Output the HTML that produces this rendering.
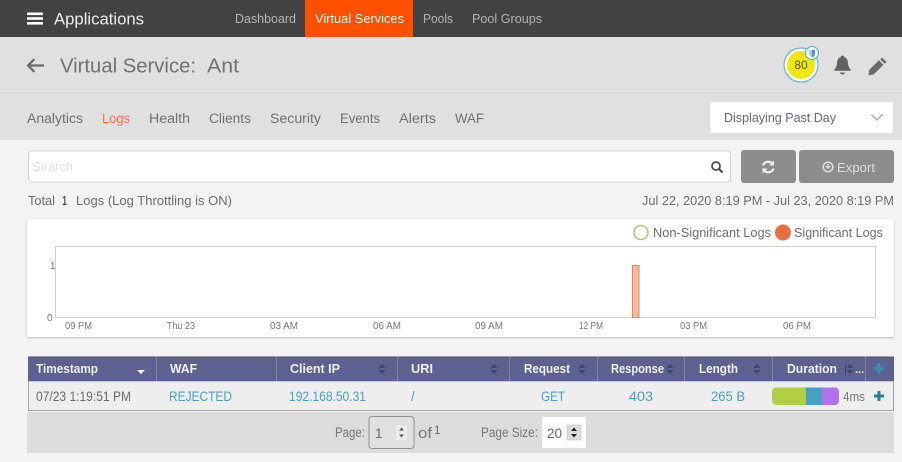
<!DOCTYPE html>
<html lang="en">
<head>
<meta charset="utf-8">
<title>Virtual Service: Ant</title>
<style>
html,body{margin:0;padding:0;width:902px;height:462px;overflow:hidden;background:#f3f3f3}
svg{display:block;filter:blur(.35px)}
text{font-family:"Liberation Sans",sans-serif;font-size:12.5px;fill:#6f6f6f}
.nav{fill:#b4b4b4;font-size:12.5px}
.tab{fill:#707070;font-size:13.5px}
.th{fill:#f0f0f5;font-size:13px;font-weight:bold}
.td{fill:#4f9dbf;font-size:13.5px}
.tick{fill:#777;font-size:10px}
.sort{fill:#3f4263}
</style>
</head>
<body>
<svg xmlns="http://www.w3.org/2000/svg" width="902" height="462" viewBox="0 0 902 462">
<defs>
<filter id="sh" x="-2%" y="-5%" width="104%" height="112%"><feDropShadow dx="0" dy="1" stdDeviation="1" flood-color="#000" flood-opacity=".22"/></filter>
<g id="s"><path class="sort" d="M-3.500-1.200L0-5l3.500 3.800zM-3.500 1.200L0 5l3.500-3.800z"/></g>
</defs>

<rect width="902" height="462" fill="#f3f3f3"/>
<!-- top bar -->
<rect width="902" height="37" fill="#424242"/>
<rect x="305" width="108" height="37" fill="#ff5000"/>
<rect x="27" y="12.500" width="16" height="2.600" fill="#fff"/><rect x="27" y="17.200" width="16" height="2.600" fill="#fff"/><rect x="27" y="22" width="16" height="2.600" fill="#fff"/>
<text x="54" y="24.500" textLength="90" lengthAdjust="spacingAndGlyphs" style="font-size:16.500px;fill:#eee">Applications</text>
<text class="nav" x="235" y="23" textLength="61" lengthAdjust="spacingAndGlyphs">Dashboard</text>
<text class="nav" x="315" y="23" textLength="89" lengthAdjust="spacingAndGlyphs" style="fill:#fff">Virtual Services</text>
<text class="nav" x="423" y="23" textLength="30" lengthAdjust="spacingAndGlyphs">Pools</text>
<text class="nav" x="472" y="23" textLength="70" lengthAdjust="spacingAndGlyphs">Pool Groups</text>

<!-- header -->
<rect y="37" width="902" height="103" fill="#e0e0e0"/>
<rect y="92" width="902" height="1.500" fill="#d7d7d7"/>
<path d="M44 65.500H28M34.500 59l-6.500 6.500 6.500 6.500" fill="none" stroke="#6b6b6b" stroke-width="2.200"/>
<text x="60" y="72.500" textLength="136" lengthAdjust="spacingAndGlyphs" style="font-size:20px;fill:#717171">Virtual Service:</text>
<text x="207" y="72.500" textLength="32" lengthAdjust="spacingAndGlyphs" style="font-size:20px;fill:#717171">Ant</text>

<circle cx="801" cy="65" r="17" fill="#fff" stroke="#62b4d4" stroke-width="1.200"/>
<circle cx="801" cy="65" r="14" fill="#f0e612"/>
<text x="801" y="69" text-anchor="middle" style="font-size:12px;fill:#5f5a20">80</text>
<circle cx="812" cy="53" r="6.500" fill="#fff" stroke="#62b4d4" stroke-width="1.200"/>
<path d="M809 50h6v3.500c0 2-1.500 3.300-3 4-1.500-.7-3-2-3-4z" fill="#a9cfe4"/>
<path d="M812 50h3v3.500c0 2-1.500 3.300-3 4z" fill="#4f97c2"/>
<path d="M842.500 55.500c1 0 1.700.7 1.700 1.600 2.800.8 3.600 3.300 3.800 6 .2 3 1 4.700 2.700 6.400v1.200h-16.400v-1.200c1.700-1.700 2.500-3.400 2.700-6.400.2-2.700 1-5.200 3.800-6 0-.9.700-1.600 1.700-1.600z M840 72.500h5c-.2 1.300-1.200 2-2.500 2s-2.300-.7-2.500-2z" fill="#616161"/>
<path d="M882 57.500l4.500 4.500-1.800 1.800-4.500-4.500zM878.900 60.200l4.500 4.500-9.700 9.700-5.200 1 .7-5.500z" fill="#6a6a6a"/>

<text class="tab" x="27" y="123" textLength="56" lengthAdjust="spacingAndGlyphs">Analytics</text>
<text class="tab" x="102" y="123" textLength="28" lengthAdjust="spacingAndGlyphs" style="fill:#f9744a">Logs</text>
<text class="tab" x="149" y="123" textLength="41" lengthAdjust="spacingAndGlyphs">Health</text>
<text class="tab" x="209" y="123" textLength="42" lengthAdjust="spacingAndGlyphs">Clients</text>
<text class="tab" x="270" y="123" textLength="51" lengthAdjust="spacingAndGlyphs">Security</text>
<text class="tab" x="340" y="123" textLength="40" lengthAdjust="spacingAndGlyphs">Events</text>
<text class="tab" x="399" y="123" textLength="37" lengthAdjust="spacingAndGlyphs">Alerts</text>
<text class="tab" x="455" y="123" textLength="29" lengthAdjust="spacingAndGlyphs">WAF</text>

<rect x="710" y="102" width="183" height="31" rx="2" fill="#fff"/>
<text x="724" y="122" textLength="112" lengthAdjust="spacingAndGlyphs" style="font-size:13px;fill:#5f6b78">Displaying Past Day</text>
<path d="M871.500 114.500l5.500 5.500 5.500-5.500" fill="none" stroke="#9a9a9a" stroke-width="1.200"/>

<!-- search row -->
<rect x="28.500" y="151" width="702" height="31" rx="3" fill="#fff" stroke="#d4d4d4"/>
<text x="32" y="171" textLength="41" lengthAdjust="spacingAndGlyphs" style="font-size:13px;fill:#e2e2e2">Search</text>
<circle cx="716" cy="166" r="4" fill="none" stroke="#4c4c4c" stroke-width="1.800"/>
<path d="M719 169l3.500 3.500" stroke="#4c4c4c" stroke-width="2.200"/>
<rect x="741" y="150" width="55" height="33" rx="3" fill="#8c8c8c"/>
<rect x="799" y="150" width="95" height="33" rx="3" fill="#8c8c8c"/>
<path d="M763 165.500a5.500 5 0 0 1 9.500-2M773.500 168.500a5.500 5 0 0 1-9.500 2" fill="none" stroke="#eee" stroke-width="2.200"/>
<path d="M774 160.500v5h-5zM762.500 173.500v-5h5z" fill="#eee"/>
<circle cx="828" cy="167" r="4.800" fill="none" stroke="#e0e0e0" stroke-width="1.500"/>
<path d="M828 164v3.500M825.800 166l2.200 2.300 2.200-2.300" fill="none" stroke="#e0e0e0" stroke-width="1.200"/>
<text x="837" y="172" textLength="38" lengthAdjust="spacingAndGlyphs" style="font-size:13px;fill:#dedede">Export</text>

<text x="28" y="205" textLength="27" lengthAdjust="spacingAndGlyphs">Total</text>
<text x="62" y="205" textLength="5" lengthAdjust="spacingAndGlyphs" style="fill:#555;font-weight:bold">1</text>
<text x="76" y="205" textLength="156" lengthAdjust="spacingAndGlyphs">Logs (Log Throttling is ON)</text>
<text x="642" y="205" textLength="252" lengthAdjust="spacingAndGlyphs">Jul 22, 2020 8:19 PM - Jul 23, 2020 8:19 PM</text>

<!-- chart -->
<rect x="27" y="219" width="867" height="118" fill="#fff" filter="url(#sh)"/>
<circle cx="641" cy="232.500" r="7" fill="#fff" stroke="#b6bd7c" stroke-width="1.500"/>
<text x="653" y="237" textLength="118" lengthAdjust="spacingAndGlyphs">Non-Significant Logs</text>
<circle cx="783" cy="232.500" r="8" fill="#e8703f"/>
<text x="794" y="237" textLength="89" lengthAdjust="spacingAndGlyphs">Significant Logs</text>
<rect x="55.500" y="246.500" width="820" height="71" fill="#fff" stroke="#cfcfcf"/>
<rect x="632.500" y="265.500" width="6.500" height="52" fill="#f5b9a2" stroke="#e9835d"/>
<text class="tick" x="50" y="269">1</text>
<text class="tick" x="47" y="321">0</text>
<text class="tick" x="65" y="329" textLength="27" lengthAdjust="spacingAndGlyphs">09 PM</text>
<text class="tick" x="167" y="329" textLength="28" lengthAdjust="spacingAndGlyphs">Thu 23</text>
<text class="tick" x="270" y="329" textLength="28" lengthAdjust="spacingAndGlyphs">03 AM</text>
<text class="tick" x="373" y="329" textLength="28" lengthAdjust="spacingAndGlyphs">06 AM</text>
<text class="tick" x="475" y="329" textLength="28" lengthAdjust="spacingAndGlyphs">09 AM</text>
<text class="tick" x="579" y="329" textLength="24" lengthAdjust="spacingAndGlyphs">12 PM</text>
<text class="tick" x="680" y="329" textLength="27" lengthAdjust="spacingAndGlyphs">03 PM</text>
<text class="tick" x="783" y="329" textLength="28" lengthAdjust="spacingAndGlyphs">06 PM</text>

<!-- table -->
<rect x="28.500" y="381" width="865" height="29.500" fill="#eeeeee" stroke="#a2a2a2"/>
<rect x="28" y="356.500" width="866" height="24.500" fill="#5d6190"/>
<rect x="28" y="356.500" width="866" height="1" fill="#555"/>
<path d="M156.500 357v24M276.500 357v24M397.500 357v24M509.500 357v24M597.500 357v24M684.500 357v24M772.500 357v24M865.500 357v24" stroke="#85858a" stroke-width="1"/>
<text class="th" x="36" y="373" textLength="62" lengthAdjust="spacingAndGlyphs">Timestamp</text>
<text class="th" x="170" y="373" textLength="27" lengthAdjust="spacingAndGlyphs">WAF</text>
<text class="th" x="290" y="373" textLength="50" lengthAdjust="spacingAndGlyphs">Client IP</text>
<text class="th" x="411" y="373" textLength="22" lengthAdjust="spacingAndGlyphs">URI</text>
<text class="th" x="524" y="373" textLength="46" lengthAdjust="spacingAndGlyphs">Request</text>
<text class="th" x="611" y="373" textLength="53" lengthAdjust="spacingAndGlyphs">Response</text>
<text class="th" x="699" y="373" textLength="39" lengthAdjust="spacingAndGlyphs">Length</text>
<text class="th" x="787" y="373" textLength="50" lengthAdjust="spacingAndGlyphs">Duration</text>
<path d="M137 370h8l-4 4z" fill="#fff"/>
<use href="#s" x="382" y="369"/><use href="#s" x="494" y="369"/><use href="#s" x="582" y="369"/><use href="#s" x="670" y="369"/><use href="#s" x="757" y="369"/><use href="#s" x="850" y="369"/>
<rect x="845" y="364" width="1" height="11" fill="#3f4263"/>
<text x="855" y="373" style="font-size:11px;fill:#e8e8f0;font-weight:bold">...</text>
<path d="M879 363.500v10M874 368.500h10" stroke="#3e8fb5" stroke-width="3"/>

<text x="36" y="401" textLength="95" lengthAdjust="spacingAndGlyphs" style="font-size:13.500px;fill:#6a6a6a">07/23 1:19:51 PM</text>
<text class="td" x="169" y="401" textLength="63" lengthAdjust="spacingAndGlyphs">REJECTED</text>
<text class="td" x="289" y="401" textLength="77" lengthAdjust="spacingAndGlyphs">192.168.50.31</text>
<text class="td" x="411" y="401">/</text>
<text class="td" x="541" y="401" textLength="24" lengthAdjust="spacingAndGlyphs">GET</text>
<text class="td" x="629" y="401" textLength="24" lengthAdjust="spacingAndGlyphs">403</text>
<text class="td" x="711" y="401" textLength="34" lengthAdjust="spacingAndGlyphs">265 B</text>
<path d="M776 387.500h30v17.500h-30a4 4 0 0 1-4-4v-9.500a4 4 0 0 1 4-4z" fill="#b0cf45"/>
<rect x="806" y="387.500" width="16" height="17.500" fill="#47a0c4"/>
<path d="M822 387.500h13a4 4 0 0 1 4 4v9.500a4 4 0 0 1-4 4h-13z" fill="#b072e8"/>
<text x="843" y="401" textLength="22" lengthAdjust="spacingAndGlyphs" style="font-size:12.500px;fill:#777">4ms</text>
<path d="M879 391v10M874 396h10" stroke="#2a7fa5" stroke-width="3"/>

<!-- footer -->
<rect x="27" y="412" width="867" height="41" fill="#dcdcdc"/>
<text x="335" y="437" textLength="30" lengthAdjust="spacingAndGlyphs" style="font-size:13.500px;fill:#777">Page:</text>
<rect x="369" y="416.500" width="45" height="32" rx="3" fill="#e0e0e0" stroke="#8f8f8f"/>
<text x="375" y="438" style="font-size:13.500px;fill:#666">1</text>
<rect x="396" y="425" width="11" height="15" fill="#ececec"/>
<path d="M399 430.500l2.500-3 2.500 3zM399 434.500l2.500 3 2.500-3z" fill="#555"/>
<text x="418" y="438" textLength="14" lengthAdjust="spacingAndGlyphs" style="font-size:14.500px;fill:#777">of</text>
<text x="434" y="434" style="font-size:11.500px;fill:#666">1</text>
<text x="481" y="437" textLength="57" lengthAdjust="spacingAndGlyphs" style="font-size:13.500px;fill:#777">Page Size:</text>
<rect x="542" y="417" width="44" height="31" rx="2" fill="#fff"/>
<text x="547" y="438" textLength="15" lengthAdjust="spacingAndGlyphs" style="font-size:13.500px;fill:#666">20</text>
<rect x="567" y="425" width="14" height="15" fill="#dcdcdc" stroke="#c4c4c4" stroke-width=".6"/>
<path d="M571 431l3-3.500 3 3.500zM571 434l3 3.500 3-3.500z" fill="#222"/>
</svg>
</body>
</html>
